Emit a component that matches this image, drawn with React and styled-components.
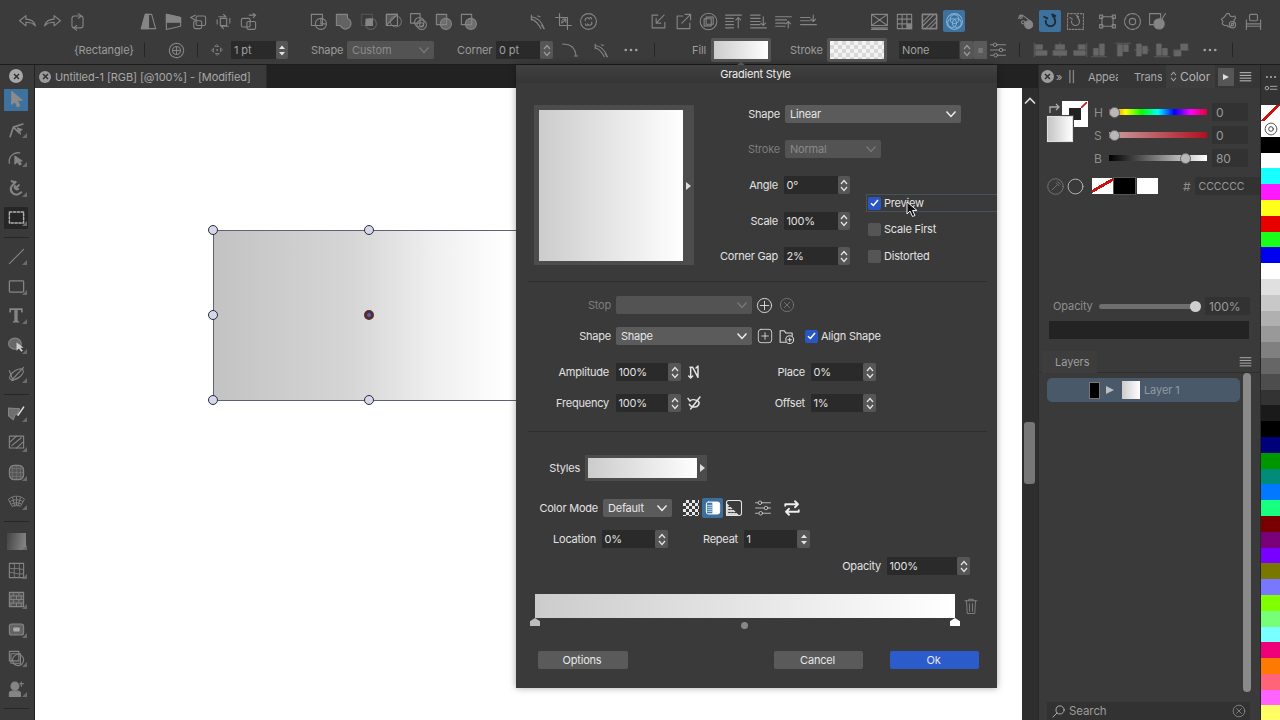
import React from "react";
import styled, { createGlobalStyle, css } from "styled-components";

const Global = createGlobalStyle`
  html, body { margin: 0; padding: 0; background: #3a3a3a; overflow: hidden; }
  * { box-sizing: border-box; }
  #root { width: 1280px; height: 720px; }
`;

const dl = (d, extra = {}) => <path d={d} {...extra} />;
const knobs = (
  <>
    <path d="M2 5h20M2 12h20M2 19h20" />
    <circle cx="8" cy="5" r="2.4" fill="#3a3a3a" />
    <circle cx="16" cy="12" r="2.4" fill="#3a3a3a" />
    <circle cx="9" cy="19" r="2.4" fill="#3a3a3a" />
  </>
);
const ICONS = {
  undo: dl("M2 11 10 4.5V9c6 0 10 2 12 8.5-3-3.3-7-4.5-12-4.5v4.5z"),
  redo: dl("M22 11 14 4.5V9c-6 0-10 2-12 8.5 3-3.3 7-4.5 12-4.5v4.5z"),
  loop: <><rect x="5" y="5" width="14" height="15" rx="3" /><path d="m13 2 4 3-4 3M11 23l-4-3 4-3" /></>,
  persp1: <><path d="M8 3h8l5 18H3z" /><path d="M8 3h4v18H3z" fill="currentColor" /></>,
  persp2: <><path d="M3 3l18 4v11L3 22z" /><path d="M3 3l18 4v6H3z" fill="currentColor" /></>,
  rot1: <><rect x="9" y="5" width="12" height="12" rx="2" /><rect x="6" y="11" width="10" height="10" rx="2" /><path d="M8 4 2 7l6 3" /></>,
  rot2: <><rect x="8" y="8" width="8" height="9" /><path d="M6 6h9l-3-3M18 18H9l3 3M4 10v5M20 8v6" /></>,
  rot3: <><rect x="3" y="8" width="11" height="11" rx="2" /><rect x="10" y="12" width="11" height="10" rx="2" /><path d="M13 4h8l-3-2m3 2-3 3" /></>,
  b1: <><path d="M3 3h14v14H3z" /><circle cx="15" cy="15" r="7" /><path d="M15 9v6h6" /></>,
  b2: <path d="M3 3h14v5a7 7 0 1 1-9 9H3z" fill="currentColor" fillOpacity=".55" />,
  b3: <><path d="M9 9h8v8H9z" fill="currentColor" /><circle cx="15" cy="15" r="7" opacity=".5" /><rect x="3" y="3" width="14" height="14" opacity=".3" /></>,
  b4: <><path d="M3 3h14L3 17z" fill="currentColor" fillOpacity=".4" /><path d="M3 3h14v14H3z" /><circle cx="15" cy="12" r="7" opacity=".7" /></>,
  b5: <><rect x="2" y="2" width="12" height="12" /><circle cx="13" cy="13" r="6" /><circle cx="16" cy="16" r="6" /><circle cx="16" cy="16" r="2.5" /></>,
  b6: <><rect x="3" y="3" width="13" height="13" fill="currentColor" fillOpacity=".25" /><circle cx="15" cy="15" r="7" fill="currentColor" fillOpacity=".6" /></>,
  b7: <><rect x="3" y="3" width="13" height="13" /><circle cx="15" cy="15" r="7" fill="currentColor" fillOpacity=".7" /></>,
  curve: <><path d="M3 6c8 1 13 6 16 15M3 9c6 2 9 6 12 12" /><path d="M3 4v6M16 17l3 4M11 5l3 1" /></>,
  crop: <><path d="M7 2v15h15M2 7h15v15" /><path d="M10 14l5-5M11 9h4v4M10 14v-3" /></>,
  link: <><circle cx="12" cy="12" r="10" /><path d="M8 11a2.500 2.500 0 0 1 5-2M16 13a2.500 2.500 0 0 1-5 2M12 8l3-1 1 2M12 16l-3 1-1-2" /></>,
  boxin: <><path d="M11 4H4v16h16v-7" /><path d="M19 4 9 14M9 8v6h6" /></>,
  boxout: <><path d="M11 5H4v16h16v-7" /><path d="M10 14 21 3M14 3h7v7" /></>,
  concentric: <><circle cx="12" cy="12" r="10.5" /><rect x="6.5" y="8.5" width="9" height="9" /><rect x="9" y="6.5" width="9" height="9" /></>,
  al1: <path d="M2 4h20M2 8h10M2 12h10M2 16h10M2 20h10M18 20V7M15 10l3-3 3 3" />,
  al2: <path d="M2 4h12M2 8h12M2 12h12M2 20h20M18 6v11M15 14l3 3 3-3M2 16h12" />,
  al3: <path d="M2 6h20M2 10h14M2 14h12M2 18h12M18 20v-8M15 15l3-3 3 3" />,
  al4: <path d="M2 7h12M2 11h12M2 16h20M18 4v8M15 9l3 3 3-3" />,
  env: <><rect x="2" y="3" width="20" height="14" /><path d="M2 3l20 14M22 3 2 17M2 20h20M2 22h20" /></>,
  grid: <><rect x="3" y="3" width="18" height="18" /><path d="M9 3v18M15 3v12M3 9h18M3 15h12" /><path d="M15 15h6v6h-6z" fill="currentColor" /></>,
  hatch: <><rect x="3" y="3" width="18" height="18" strokeWidth="2" /><path d="M3 13 13 3M3 18 18 3M7 21 21 7M12 21l9-9" /></>,
  flower: <><circle cx="12" cy="12" r="10" /><circle cx="12" cy="9" r="5.5" /><circle cx="9" cy="14" r="5.5" /><circle cx="15" cy="14" r="5.5" /></>,
  magnetNodes: <><path d="M3 8l5-4 11 8" /><circle cx="6" cy="6" r="2" /><circle cx="9" cy="13" r="2" /><circle cx="16" cy="16" r="5" fill="currentColor" /></>,
  magnet: <path d="M6 11v1a6 6 0 0 0 12 0c0-3-1-5-3-7M4 6l4 2M14 3l4 2" strokeWidth="2.4" />,
  magnetDash: <><rect x="2" y="2" width="20" height="20" strokeDasharray="2 2" /><path d="M7 11v1a5 5 0 0 0 10 0c0-3-1-4-3-6M5 7l3 2M13 4l3 2" /></>,
  corners: <><rect x="5" y="6" width="14" height="12" /><path d="M2 4h4v4H2zM18 4h4v4h-4zM2 16h4v4H2zM18 16h4v4h-4z" /></>,
  target: <><circle cx="12" cy="12" r="10" strokeDasharray="5 1.5" /><circle cx="12" cy="12" r="4" /></>,
  sqCircle: <><rect x="2" y="2" width="14" height="14" /><circle cx="14" cy="15" r="6.5" fill="currentColor" /><path d="M22 2l-8 13" /></>,
  gear: <><path d="M10 2h3l1 3 3 1 3-1 1 3-2 2v4l-3 1-1 3-3 1-2-2H7l-3-2 1-3-2-3 3-2z" /><circle cx="17" cy="16" r="4" /><circle cx="17" cy="16" r="1.5" /></>,
  chair: <><rect x="7" y="3" width="10" height="8" rx="1.5" /><path d="M3 10v12M21 10v12M3 15h18v-2" /><path d="M3 18h18" /></>,
  flower2: <><circle cx="12" cy="12" r="9" strokeDasharray="3 1" /><circle cx="12" cy="12" r="5" /><path d="M12 8v8M8 12h8" /></>,
  move: <><path d="M12 3l3 3h-6zM12 21l-3-3h6zM3 12l3-3v6zM21 12l-3 3V9z" /><circle cx="12" cy="12" r="1" /></>,
  corner: <path d="M2 4c8 0 17 3 18 16M18 20h4" />,
  sliders: knobs,
  close: <><circle cx="12" cy="12" r="10" /><path d="M8 8l8 8M16 8l-8 8" /></>,
  plusC: <><circle cx="12" cy="12" r="10" /><path d="M12 6v12M6 12h12" /></>,
  plusS: <><rect x="2" y="2" width="20" height="20" rx="4" /><path d="M12 7v10M7 12h10" /></>,
  folder: <><path d="M11 20H3V4h6l2 3h9v4" /><circle cx="16.5" cy="16.5" r="5.5" /><path d="M16.5 14v5M14 16.5h5" /></>,
  nodeX: <path d="M6 5h4l8 15M7 5v15M18 4v16M4 18l3 3 3-3M15 6l3-3" strokeWidth="2.200" />,
  wave: <path d="M3 5l3 4c2-3 8-2 12 0 4 3 0 9-5 9-4 0-7-2-8-4M21 3 7 21" strokeWidth="2.200" />,
  splitBox: <><rect x="2" y="3" width="20" height="18" rx="3" fill="#fff" stroke="#fff" /><path d="M3 4h8v16H3z" fill="#3d79ad" stroke="none" /><path d="M4 8h6M4 11h6M4 14h6M4 17h6" stroke="#cde" /></>,
  gridCorner: <><rect x="2" y="2" width="20" height="20" rx="3" /><path d="M2 6l16 16H2z" fill="currentColor" fillOpacity=".9" /><path d="M5 10h2M9 14h2M5 14h2M5 18h2M9 18h2M13 18h2" stroke="#333" strokeWidth="1.600" /></>,
  swap: <path d="M3 9V7h17M16 3l4 4-4 4M21 15v2H4M8 13l-4 4 4 4" strokeWidth="2.400" />,
  trash: <path d="M4 5h16M9 5V3h6v2M6 5l1 17h10l1-17M10 9v10M14 9v10" />,
  drop: <><circle cx="12" cy="12" r="11" /><path d="M7 17l7-7M13 7l4 4M15 5l4 4" /></>,
  ring: <circle cx="12" cy="12" r="10.5" />,
  search: <><circle cx="14.5" cy="9.5" r="6.5" /><path d="M9.500 14.500 3 21" /></>,
  menu: <path d="M2 5h20M2 10h20M2 15h20M2 20h20" strokeWidth="1.800" />,
  listDots: <><circle cx="5" cy="7" r="3" /><path d="M11 4h11M11 9h11" /></>,
  dots: <><circle cx="5" cy="12" r="1.800" fill="currentColor" stroke="none" /><circle cx="12" cy="12" r="1.800" fill="currentColor" stroke="none" /><circle cx="19" cy="12" r="1.800" fill="currentColor" stroke="none" /></>,
  a1: <path d="M3 3v18M5 5h9v6H5zM5 13h15v6H5z" fill="currentColor" />,
  a2: <path d="M12 2v20M6 5h12v6H6zM3 13h18v6H3z" fill="currentColor" />,
  a3: <path d="M21 3v18M10 5h9v6h-9zM4 13h15v6H4z" fill="currentColor" />,
  a4: <path d="M2 21h20M5 10h6v9H5zM13 4h6v15h-6z" fill="currentColor" />,
  a5: <path d="M2 3h20M5 5h6v15H5zM13 5h6v9h-6z" fill="currentColor" />,
  a6: <path d="M2 12h20M5 4h6v16H5zM13 7h6v10h-6z" fill="currentColor" />,
  a7: <path d="M2 21h20M5 4h6v15H5zM13 10h6v9h-6z" fill="currentColor" />,
  a8: <path d="M2 12h20M3 13h9v7H3zM12 4h9v8h-9z" fill="currentColor" />,
  arrow: <path d="M6 2v16l4-4 3 7 3-1-3-7h6z" fill="currentColor" />,
  nodeTool: <><path d="M4 21l4-12 12-4M8 9l7 7" strokeWidth="2" /><path d="M13 10l6 2-3 2 1 4z" fill="currentColor" /></>,
  arcArrow: <><path d="M3 18a11 11 0 0 1 13-13" strokeWidth="1.600" /><path d="M10 9v10l3-3 3 4 2-1-3-4h4z" fill="currentColor" /></>,
  magnetTool: <path d="M7 9l-2 3a7 7 0 0 0 10 8l3-2M11 5l-3 3M15 9l-3 3M6 4l4 1M10 10a3 3 0 0 0 4 4" strokeWidth="2.600" />,
  dashRect: <rect x="3" y="5" width="18" height="14" strokeDasharray="3 2" strokeWidth="1.800" />,
  line: <path d="M3 21 21 3" />,
  rect: <rect x="3" y="5" width="18" height="14" rx="1" strokeWidth="1.600" />,
  T: <path d="M4 4h16v5h-1.500l-1-3H14v13l2 1v1H8v-1l2-1V6H6.500l-1 3H4z" fill="currentColor" stroke="none" />,
  blob: <><ellipse cx="10" cy="11" rx="8" ry="7" fill="currentColor" fillOpacity=".6" /><path d="M12 9v11l3-3 3 4 2-1-3-4h4z" fill="#ccc" stroke="none" /></>,
  orbit: <><ellipse cx="12" cy="12" rx="10" ry="5" transform="rotate(-35 12 12)" /><path d="M3 7l4 11 14-15M6 20l10-5" /></>,
  brush: <><path d="M2 5l14 1-3 7-3 1-2 6-6-5z" fill="currentColor" fillOpacity=".7" /><path d="M14 14 21 4" stroke="#ddd" strokeWidth="2" /></>,
  panel: <><rect x="3" y="4" width="18" height="15" /><path d="M6 16 18 6M3 12l9-8M12 19l9-8" /></>,
  rounded: <><rect x="3" y="3" width="18" height="18" rx="6" fill="currentColor" fillOpacity=".4" /><path d="M3 12h18M12 3v18M7 3v18M17 3v18M3 7h18M3 17h18" strokeWidth=".5" /></>,
  fan: <path d="M2 9c6-5 14-5 20 0l-5 9c-3-2-7-2-10 0zM7 7l3 11M12 6v11M17 7l-3 11M4 12c5-3 11-3 16 0M6 15c4-2 8-2 12 0" strokeWidth="1.100" />,
  mesh: <><rect x="3" y="3" width="18" height="18" /><path d="M3 9c5 2 8-1 18 2M3 15c6-2 9 3 18 1M9 3c2 6-2 10 1 18M16 3c-2 6 2 10-1 18" strokeWidth="1.100" /></>,
  bricks: <><rect x="3" y="3" width="18" height="18" fill="currentColor" fillOpacity=".35" /><path d="M3 7.500h18M3 12h18M3 16.500h18M8 3v4.500M15 3v4.500M5 7.500V12M12 7.500V12M18 7.500V12M8 12v4.500M15 12v4.500M5 16.500V21M12 16.500V21M18 16.500V21" strokeWidth="1.100" /></>,
  frame: <><rect x="3" y="5" width="18" height="14" rx="3" fill="currentColor" fillOpacity=".55" /><rect x="8" y="9.500" width="8" height="5" rx="1" fill="#aaa" stroke="none" /></>,
  stack: <><rect x="3" y="3" width="12" height="12" /><rect x="5" y="6" width="12" height="12" /><circle cx="14" cy="14" r="7" /></>,
  stamp: <><circle cx="10" cy="9" r="5" fill="currentColor" /><path d="M3 22v-4c0-2 3-3 7-3s7 1 7 3v4z" fill="currentColor" /><path d="M18 4v5M16 6h5" /></>,
};

const Svg = styled.svg`
  display: block;
  flex: none;
  width: ${(p) => p.$s || 20}px;
  height: ${(p) => p.$s || 20}px;
  color: ${(p) => p.$c || "#858585"};
  fill: none;
  stroke: currentColor;
  stroke-width: ${(p) => p.$w || 1.4};
  stroke-linecap: round;
  stroke-linejoin: round;
  margin-left: ${(p) => p.$ml || 0}px;
`;
const Ic = ({ n, s, c, w, ml }) => (
  <Svg viewBox="0 0 24 24" $s={s} $c={c} $w={w} $ml={ml}>{ICONS[n]}</Svg>
);

const App_ = styled.div`
  position: relative;
  width: 1280px;
  height: 720px;
  overflow: hidden;
  display: flex;
  flex-direction: column;
  background: #3a3a3a;
  font-family: Inter, "Liberation Sans", sans-serif;
  font-size: 11px;
  letter-spacing: -0.1px;
  color: #e2e2e2;
`;

/* ---------- toolbar ---------- */
const Toolbar = styled.header`
  flex: none;
  height: 65px;
  background: #3b3b3b;
  border-bottom: 1px solid #1d1d1d;
  padding-top: 8px;
`;
const IconRow = styled.div`
  display: flex;
  height: 26px;
  padding-left: 14.5px;
`;
const IconGroup = styled.div`
  display: flex;
  margin-left: ${(p) => p.$ml || 0}px;
`;
const ToolCell = styled.div`
  width: 25px;
  height: 26px;
  display: flex;
  align-items: center;
  justify-content: center;
  position: relative;
  ${(p) => p.$on && css`
    &::before {
      content: "";
      position: absolute;
      inset: 2px 1.5px;
      background: #3d729f;
      border-radius: 2px;
    }
    & > svg { position: relative; }
  `}
`;
const PropRow = styled.div`
  display: flex;
  align-items: center;
  height: 20px;
  margin-top: 6px;
  padding-left: 74px;
  color: #9c9c9c;
`;
const Txt = styled.span`
  flex: none;
  width: ${(p) => p.$w}px;
  margin-left: ${(p) => p.$ml || 0}px;
  white-space: nowrap;
  overflow: ${(p) => p.$clip ? "hidden" : "visible"};
  text-align: ${(p) => p.$a || "left"};
`;
const VSep = styled.i`
  flex: none;
  display: block;
  width: 1px;
  height: 14px;
  background: #252525;
  margin-left: ${(p) => p.$ml || 0}px;
`;
const Slot = styled.div`
  flex: none;
  display: flex;
  justify-content: center;
  align-items: center;
  width: ${(p) => p.$w}px;
  margin-left: ${(p) => p.$ml || 0}px;
`;
const Input = styled.div`
  flex: none;
  width: ${(p) => p.$w}px;
  height: ${(p) => p.$h || 18}px;
  margin-left: ${(p) => p.$ml || 0}px;
  background: #2a2a2a;
  color: ${(p) => p.$dim ? "#a0a0a0" : "#e0e0e0"};
  display: flex;
  align-items: center;
  padding-left: ${(p) => p.$dim ? 3 : 2.5}px;
  border-radius: 1px;
`;
const Select = styled.div`
  flex: none;
  width: ${(p) => p.$w}px;
  height: 18px;
  margin-left: ${(p) => p.$ml || 0}px;
  background: ${(p) => p.$dim ? "#535353" : "#5b5b5b"};
  color: ${(p) => p.$dim ? "#8a8a8a" : "#e6e6e6"};
  display: flex;
  align-items: center;
  justify-content: space-between;
  padding: 0 4px 0 5px;
  border-radius: 2px;
`;
const Chevron = ({ c = "#f0f0f0" }) => (
  <svg width="12" height="8" viewBox="0 0 12 8" fill="none" stroke={c} strokeWidth="1.400"><path d="M1.500 1.500 6 6.500l4.500-5" /></svg>
);
const StepBox = styled.div`
  flex: none;
  width: ${(p) => p.$w || 13}px;
  height: 18px;
  margin-left: ${(p) => p.$ml || 0}px;
  background: #565656;
  border-radius: 2px;
  display: flex;
  align-items: center;
  justify-content: center;
  color: ${(p) => p.$c || "#e4e4e4"};
`;
const Stepper = ({ w, ml, c, solid }) => (
  <StepBox $w={w} $ml={ml} $c={c}>
    <svg width="8" height="13" viewBox="0 0 8 13" fill={solid ? "currentColor" : "none"} stroke="currentColor" strokeWidth={solid ? 0 : 1.2}>
      {solid ? <path d="M4 1.500 7 5H1zM4 11.500 1 8h6z" /> : <path d="M1 5 4 1.500 7 5M1 8l3 3.500L7 8" />}
    </svg>
  </StepBox>
);
const SwatchWell = styled.div`
  flex: none;
  width: 60px;
  height: 24px;
  margin-left: ${(p) => p.$ml || 0}px;
  background: #555;
  padding: 3px;
  border-radius: 2px;
`;
const FillSwatch = styled.div`
  width: 100%;
  height: 100%;
  background: ${(p) => p.$check
    ? "repeating-conic-gradient(#d8d8d8 0 25%, #f4f4f4 0 50%) 0 0 / 8px 8px"
    : "linear-gradient(90deg, #ccc, #fff)"};
`;
const StepDisabled = styled.div`
  flex: none;
  width: 13px;
  height: 18px;
  background: #5a5a5a;
  display: flex;
  align-items: center;
  justify-content: center;
  color: #777;
  font-size: 6px;
`;

/* ---------- body ---------- */
const Body = styled.div`
  flex: 1;
  display: flex;
  min-height: 0;
`;
const ToolCol = styled.aside`
  flex: none;
  width: 35px;
  height: 655px;
  overflow: hidden;
  background: #3a3a3a;
  border-right: 1px solid #222;
  padding-top: 2px;
`;
const CloseSlot = styled.div`
  height: 18px;
  display: flex;
  align-items: center;
  justify-content: center;
  padding-right: 2px;
`;
const XBadge = styled.div`
  flex: none;
  width: ${(p) => p.$s || 13}px;
  height: ${(p) => p.$s || 13}px;
  border-radius: 50%;
  background: ${(p) => p.$bg || "#9c9c9c"};
  color: #2c2c2c;
  display: flex;
  align-items: center;
  justify-content: center;
`;
const X = ({ s, bg }) => (
  <XBadge $s={s} $bg={bg}>
    <svg width="7" height="7" viewBox="0 0 7 7" stroke="currentColor" strokeWidth="1.400"><path d="M1 1l5 5M6 1 1 6" /></svg>
  </XBadge>
);
const Tool = styled.div`
  position: relative;
  height: 29.4px;
  display: flex;
  align-items: center;
  justify-content: center;
  padding-right: 2px;
  color: #8a8a8a;
  ${(p) => p.$on && css`
    &::before {
      content: "";
      position: absolute;
      left: 4px;
      right: 6px;
      top: 4px;
      bottom: 3px;
      background: ${p.$on === "blue" ? "#3d729f" : "#262626"};
      border-radius: 1px;
    }
    & > svg { position: relative; }
  `}
  ${(p) => p.$fly && css`
    &::after {
      content: "";
      position: absolute;
      right: 7px;
      bottom: 6px;
      border-style: solid;
      border-width: 0 0 5px 5px;
      border-color: transparent transparent #6c6c6c transparent;
    }
  `}
`;
const ToolSep = styled.hr`
  height: 1px;
  margin: 5px 5px 4px 4px;
  border: 0;
  background: #262626;
`;
const GradientChip = styled.div`
  width: 19px;
  height: 17px;
  background: linear-gradient(100deg, #444, #8a8a8a);
`;

const DocCol = styled.main`
  flex: none;
  width: 1003px;
  display: flex;
  flex-direction: column;
`;
const TabBar = styled.div`
  flex: none;
  height: 23px;
  background: #222;
  display: flex;
`;
const DocTab = styled.div`
  width: 232px;
  background: #3a3a3a;
  display: flex;
  align-items: center;
  gap: 4px;
  padding-left: 4px;
  color: #a8a8a8;
  border-right: 1px solid #2c2c2c;
`;
const DocRow = styled.div`
  flex: 1;
  display: flex;
  min-height: 0;
`;
const Canvas = styled.div`
  position: relative;
  width: 987px;
  background: #fff;
`;
const Shape = styled.div`
  position: absolute;
  left: 178px;
  top: 142px;
  width: 312px;
  height: 171px;
  background: linear-gradient(90deg, #c3c3c3, #d6d6d6 45%, #f0f0f0 72%, #fff 95%);
  border: 1px solid #5f607c;
`;
const Handle = styled.i`
  position: absolute;
  width: 10px;
  height: 10px;
  border-radius: 50%;
  background: #d4d8ea;
  border: 1.500px solid #2a2a36;
  left: ${(p) => p.$x}px;
  top: ${(p) => p.$y}px;
`;
const CenterDot = styled.i`
  position: absolute;
  width: 10px;
  height: 10px;
  border-radius: 50%;
  background: #3e6cc4;
  border: 3px solid #5a2a2e;
  left: 150px;
  top: 79px;
`;
const ScrollCol = styled.div`
  width: 16px;
  background: #2e2e2e;
  display: flex;
  flex-direction: column;
  align-items: center;
  padding-top: 9px;
`;
const ScrollThumb = styled.div`
  width: 11px;
  height: 62px;
  margin: 317px 0 0 -1px;
  background: #767676;
  border-radius: 3px;
`;

/* ---------- right panel ---------- */
const Panel = styled.section`
  flex: none;
  width: 222px;
  display: flex;
  flex-direction: column;
  background: #3a3a3a;
  border-left: 1px solid #2a2a2a;
`;
const PanelTabs = styled.div`
  flex: none;
  height: 23px;
  display: flex;
  align-items: center;
  background: #363636;
  color: #a8a8a8;
`;
const ColorTab = styled.div`
  flex: none;
  width: 49px;
  height: 23px;
  margin-left: 4px;
  background: #3d3d3d;
  display: flex;
  align-items: center;
  gap: 3px;
  padding-left: 4px;
  color: #b4b4b4;
  font-size: 12px;
`;
const PlayBtn = styled.div`
  flex: none;
  width: 16px;
  height: 18px;
  margin-left: 3px;
  background: #565656;
  display: flex;
  align-items: center;
  justify-content: center;
  &::before {
    content: "";
    border-style: solid;
    border-width: 3.500px 0 3.500px 6px;
    border-color: transparent transparent transparent #ddd;
  }
`;
const ColorArea = styled.div`
  display: flex;
  padding: 15px 0 0 8px;
`;
const SwatchStack = styled.div`
  position: relative;
  flex: none;
  width: 44px;
  height: 40px;
`;
const StrokeSq = styled.div`
  position: absolute;
  left: 15px;
  top: -2px;
  width: 26px;
  height: 26px;
  background: #fff;
  display: flex;
  align-items: center;
  justify-content: center;
  &::after {
    content: "";
    width: 12px;
    height: 12px;
    background: #222;
  }
`;
const StrokeSlash = styled.svg`
  position: absolute;
  right: 1px;
  top: 1px;
  width: 6px;
  height: 6px;
`;
const FillSq = styled.div`
  position: absolute;
  left: 0;
  top: 13px;
  width: 26px;
  height: 26px;
  border: 1px solid #ddd;
  outline: 1px solid #444;
  background: linear-gradient(90deg, #c4c4c4, #fff);
`;
const SwapMark = styled.div`
  position: absolute;
  left: 1px;
  top: -1px;
  color: #aaa;
`;
const Sliders = styled.div`
  display: flex;
  flex-direction: column;
  gap: 5px;
`;
const SliderRow = styled.div`
  display: flex;
  align-items: center;
  height: 18px;
  color: #8e8e8e;
`;
const SliderLabel = styled.span`
  width: 18px;
  padding-left: 3px;
  font-size: 12px;
`;
const Track = styled.div`
  position: relative;
  width: 98px;
  height: 6px;
  background: ${(p) => p.$bg};
`;
const Thumb = styled.i`
  position: absolute;
  width: 11px;
  height: 11px;
  top: -2.500px;
  left: ${(p) => p.$x}px;
  border-radius: 50%;
  background: #b8b8b8;
  border: 1px solid #666;
`;
const ValueBox = styled.div`
  width: ${(p) => p.$w || 36}px;
  height: 18px;
  margin-left: ${(p) => p.$ml || 5}px;
  background: #323232;
  display: flex;
  align-items: center;
  padding-left: 4px;
  color: #9a9a9a;
  font-size: 12px;
`;
const SwatchRow = styled.div`
  display: flex;
  align-items: center;
  height: 22px;
  margin-top: 8px;
  padding-left: 8px;
`;
const MiniSwatch = styled.div`
  flex: none;
  width: 21px;
  height: 16px;
  margin-left: ${(p) => p.$ml ?? 1}px;
  background: ${(p) => p.$bg};
  outline: ${(p) => p.$ring ? "1px solid #555" : "none"};
`;
const HexLabel = styled.span`
  flex: none;
  margin-left: 25px;
  color: #8e8e8e;
  font-size: 12px;
`;
const HexBox = styled(ValueBox)`
  margin-left: 4px;
  width: 66px;
  letter-spacing: 0;
  font-size: 10.500px;
`;
const OpacityRow = styled.div`
  display: flex;
  align-items: center;
  height: 18px;
  margin-top: 100px;
  padding-left: 14px;
  color: #8e8e8e;
`;
const OpacityTrack = styled.div`
  position: relative;
  width: 97px;
  height: 5px;
  margin-left: 7px;
  background: #6e6e6e;
  border-radius: 3px;
`;
const OpacityThumb = styled.i`
  position: absolute;
  right: -5px;
  top: -3px;
  width: 11px;
  height: 11px;
  border-radius: 50%;
  background: #cfcfcf;
`;
const DarkBar = styled.div`
  height: 18px;
  margin: 6px 11px 0 10px;
  background: #232323;
`;
const LayersHead = styled.div`
  flex: none;
  height: 22px;
  margin-top: 12px;
  display: flex;
  align-items: center;
  justify-content: space-between;
  border-bottom: 1px solid #2f2f2f;
  padding: 0 8px 0 3px;
`;
const LayersTab = styled.div`
  width: 55px;
  height: 22px;
  background: #3d3d3d;
  color: #9e9e9e;
  display: flex;
  align-items: center;
  padding-left: 13px;
  letter-spacing: 0;
`;
const LayersBody = styled.div`
  flex: 1;
  display: flex;
  min-height: 0;
`;
const LayerList = styled.div`
  flex: 1;
  padding: 5px 0 0 8px;
`;
const LayerRow = styled.div`
  width: 193px;
  height: 24px;
  background: #49596a;
  border-radius: 5px;
  display: flex;
  align-items: center;
  padding-left: 42px;
  color: #8f9aa5;
`;
const LayerBlack = styled.div`
  width: 11px;
  height: 17px;
  background: #000;
  border: 1px solid #777;
`;
const Tri = styled.i`
  display: block;
  margin-left: 6px;
  border-style: solid;
  border-width: 4.500px 0 4.500px 8px;
  border-color: transparent transparent transparent #bdbdbd;
`;
const LayerThumb = styled.div`
  width: 18px;
  height: 18px;
  margin: 0 4px 0 8px;
  background: linear-gradient(90deg, #ccc, #fff);
`;
const PanelScroll = styled.div`
  flex: none;
  width: 8px;
  margin: 0 9px 2px 3px;
  background: #8a8a8a;
  border-radius: 4px;
`;
const SearchBar = styled.div`
  flex: none;
  height: 26px;
  padding: 8px 10px 0 8px;
`;
const SearchInner = styled.div`
  height: 18px;
  background: #323232;
  display: flex;
  align-items: center;
  gap: 3px;
  padding: 0 4px;
  color: #9c9c9c;
  font-size: 11.5px;
  & > :last-child { margin-left: auto; }
`;
const Palette = styled.div`
  flex: none;
  width: 20px;
  background: #333;
  border-left: 1px solid #272727;
  display: flex;
  flex-direction: column;
`;
const PaletteHead = styled.div`
  flex: none;
  height: 40px;
  display: flex;
  flex-direction: column;
  align-items: center;
  padding-top: 5px;
  gap: 0;
`;
const PalDot = styled.div`
  flex: none;
  height: 15.8px;
  background: ${(p) => p.$c};
  display: flex;
  align-items: center;
  justify-content: center;
`;
const NoneChip = styled.div`
  flex: none;
  height: 16px;
  background: linear-gradient(135deg, #fff 44%, #c11 44%, #c11 56%, #fff 56%);
`;

/* ---------- dialog ---------- */
const Dialog = styled.div`
  position: absolute;
  left: 516px;
  top: 65px;
  width: 481px;
  height: 623px;
  background: #3a3a3a;
  letter-spacing: -0.22px;
  box-shadow: 0 0 7px rgba(0,0,0,.35);
  &::before {
    content: "";
    position: absolute;
    left: 221px;
    top: -3px;
    border-style: solid;
    border-width: 0 4px 3px 4px;
    border-color: transparent transparent #555 transparent;
  }
`;
const DialogTitle = styled.div`
  height: 18px;
  background: linear-gradient(#414141, #353535);
  text-align: center;
  line-height: 18px;
  color: #ececec;
  padding-right: 2px;
`;
const TopPart = styled.div`
  display: flex;
  padding: 22px 0 0 18px;
`;
const PreviewWell = styled.div`
  flex: none;
  display: flex;
  align-items: center;
  width: 160px;
  height: 160px;
  background: #4c4c4c;
  padding: 5px 0 4px 5px;
`;
const PreviewInner = styled.div`
  flex: none;
  width: 144px;
  height: 151px;
  background: linear-gradient(90deg, #ccc, #fff);
`;
const WellArrow = styled.i`
  display: block;
  flex: none;
  margin-left: ${(p) => p.$ml || 3}px;
  border-style: solid;
  border-width: 4px 0 4px 5px;
  border-color: transparent transparent transparent #ddd;
`;
const TopRight = styled.div`
  display: flex;
  flex-direction: column;
  flex: 1;
`;
const FormRow = styled.div`
  display: flex;
  align-items: center;
  height: 18px;
  margin-top: ${(p) => p.$mt || 0}px;
  padding-left: ${(p) => p.$pl || 0}px;
`;
const Label = styled.label`
  flex: none;
  width: ${(p) => p.$w}px;
  margin-left: ${(p) => p.$ml || 0}px;
  margin-right: ${(p) => p.$gap ?? 5}px;
  text-align: right;
  white-space: nowrap;
  color: ${(p) => p.$dim ? "#7d7d7d" : "#e2e2e2"};
`;
const LowerTop = styled.div`
  display: flex;
  margin-top: 18px;
`;
const FieldCol = styled.div`
  display: flex;
  flex-direction: column;
  gap: 17.5px;
`;
const CheckCol = styled.div`
  position: relative;
  margin: 18px 0 0 16px;
  flex: 1;
  display: flex;
  flex-direction: column;
`;
const CheckRow = styled.div`
  position: relative;
  display: flex;
  align-items: center;
  height: 18px;
  padding-left: 2px;
  margin-top: ${(p) => p.$mt || 0}px;
  ${(p) => p.$focus && css`
    border: 1px solid #46535f;
    border-right: 0;
    padding-left: 1px;
  `}
`;
const Box = styled.div`
  flex: none;
  width: 13px;
  height: 13px;
  border-radius: 2px;
  margin-left: ${(p) => p.$ml || 0}px;
  margin-right: 3px;
  background: ${(p) => p.$on ? "#2a55c4" : "#555"};
  display: flex;
  align-items: center;
  justify-content: center;
`;
const Check = ({ on, ml }) => (
  <Box $on={on} $ml={ml}>
    {on && <svg width="9" height="8" viewBox="0 0 9 8" fill="none" stroke="#fff" strokeWidth="1.500"><path d="M1 4.200 3.400 6.500 8 1" /></svg>}
  </Box>
);
const CursorMark = styled.svg`
  position: absolute;
  left: 39px;
  top: 6px;
  width: 13px;
  height: 17px;
`;
const Rule = styled.hr`
  height: 1px;
  border: 0;
  margin: ${(p) => p.$mt}px 10px 0 12px;
  background: #2e2e2e;
`;
const StyleWell = styled.div`
  flex: none;
  display: flex;
  align-items: center;
  width: 122px;
  height: 26px;
  background: #4c4c4c;
  padding: 3px 0 3px 3px;
`;
const StyleInner = styled.div`
  flex: none;
  width: 109px;
  height: 20px;
  background: linear-gradient(90deg, #ccc, #fff);
`;
const StyleRow = styled.div`
  display: flex;
  align-items: center;
  height: 26px;
  margin-top: 23px;
  padding-left: 12px;
`;
const ModeBtn = styled.div`
  flex: none;
  width: ${(p) => p.$w || 20}px;
  height: 20px;
  margin-left: ${(p) => p.$ml || 0}px;
  display: flex;
  align-items: center;
  justify-content: center;
  background: ${(p) => p.$on ? "#3d6f9c" : "transparent"};
  border-radius: 2px;
`;
const CheckerChip = styled.div`
  width: 16px;
  height: 16px;
  background: repeating-conic-gradient(#e8e8e8 0 25%, #3a3a3a 0 50%) 0 0 / 6px 6px;
`;
const BarRow = styled.div`
  display: flex;
  align-items: center;
  margin-top: 19px;
  padding-left: 19px;
`;
const GradBar = styled.div`
  position: relative;
  flex: none;
  width: 420px;
  height: 24px;
  background: linear-gradient(90deg, #ccc, #fff);
`;
const Stop = styled.i`
  position: absolute;
  top: 24px;
  left: ${(p) => p.$x}px;
  width: 10px;
  height: 8px;
  background: ${(p) => p.$c};
  clip-path: polygon(50% 0, 100% 40%, 100% 100%, 0 100%, 0 40%);
`;
const MidDot = styled.i`
  position: absolute;
  top: 28px;
  left: 206px;
  width: 7px;
  height: 7px;
  border-radius: 50%;
  background: #888;
`;
const ButtonRow = styled.div`
  display: flex;
  margin-top: 33px;
  padding-left: 22px;
`;
const Btn = styled.button`
  flex: none;
  width: ${(p) => p.$w}px;
  height: 18px;
  margin-left: ${(p) => p.$ml || 0}px;
  padding: 0 2px 0 0;
  border: 0;
  border-radius: 2px;
  font: inherit;
  letter-spacing: inherit;
  background: ${(p) => p.$primary ? "#2c5ccb" : "#5a5a5a"};
  color: #e8e8e8;
`;

const PALETTE = ["#000","#fff","#19ffff","#ff19ff","#ffff19","#e60000","#19ff19","#0000f0","#fff","#e0e0e0","#c8c8c8","#b0b0b0","#999","#808080","#666","#4d4d4d","#333","#1a1a1a","#000","#000078","#009600","#008a78","#0078ff","#19ff80","#780000","#780078","#7800ff","#787800","#7878ff","#80ff00","#78ff78","#78ffff","#f00078","#ff7800","#ff6478","#ff64ff","#ffff64"];

const top = [
  { ml: 0, items: ["undo", "redo", "loop"] },
  { ml: 46, items: ["persp1", "persp2", "rot1", "rot2", "rot3"] },
  { ml: 45, items: ["b1", "b2", "b3", "b4", "b5", "b6", "b7"] },
  { ml: 45, items: ["curve", "crop", "link"] },
  { ml: 45, items: ["boxin", "boxout", "concentric", "al1", "al2", "al3", "al4"] },
  { ml: 46, items: ["env", "grid", "hatch", "flower"] },
  { ml: 46, items: ["magnetNodes", "magnet", "magnetDash"] },
  { ml: 7, items: ["corners", "target", "sqCircle"] },
  { ml: 46, items: ["gear", "chair"] },
];
const selected = { flower: 1, magnet: 1 };

const toolGroups = [
  ["arrow", "nodeTool", "arcArrow", "magnetTool", "dashRect"],
  ["line", "rect", "T", "blob", "orbit"],
  ["brush", "panel", "rounded", "fan"],
  ["gradient", "mesh", "bricks", "frame", "stack", "stamp"],
];

const Spin = ({ label, lw, lml, gap, iw = 52, value, sw }) => (
  <>
    <Label $w={lw} $ml={lml} $gap={gap}>{label}</Label>
    <Input $w={iw}>{value}</Input>
    <Stepper w={sw} />
  </>
);

export default function App() {
  return (
    <App_>
      <Global />
      <Toolbar>
        <IconRow>
          {top.map((g, i) => (
            <IconGroup key={i} $ml={g.ml}>
              {g.items.map((n) => (
                <ToolCell key={n} $on={selected[n]}>
                  <Ic n={n} s={19} c={n === "magnet" ? "#1f2b38" : n === "flower" ? "#7fb0d8" : undefined} />
                </ToolCell>
              ))}
            </IconGroup>
          ))}
        </IconRow>
        <PropRow>
          <Txt $w={58}>{"{Rectangle}"}</Txt>
          <VSep $ml={12} />
          <Slot $w={20} $ml={21}><Ic n="flower2" s={19} /></Slot>
          <VSep $ml={11} />
          <Slot $w={16} $ml={11}><Ic n="move" s={14} /></Slot>
          <Input $w={45} $ml={6} $dim>1 pt</Input>
          <Stepper w={12} solid />
          <Txt $w={32} $ml={23}>Shape</Txt>
          <Select $w={87} $ml={4} $dim>Custom<Chevron c="#777" /></Select>
          <Txt $w={36} $ml={23}>Corner</Txt>
          <Input $w={44} $ml={3} $dim>0 pt</Input>
          <Stepper c="#999" />
          <Slot $w={20} $ml={7}><Ic n="corner" s={18} /></Slot>
          <Slot $w={20} $ml={12}><Ic n="curve" s={18} /></Slot>
          <Slot $w={18} $ml={10}><Ic n="dots" s={18} c="#a0a0a0" /></Slot>
          <VSep $ml={14} />
          <Txt $w={15} $ml={37}>Fill</Txt>
          <SwatchWell $ml={4}><FillSwatch /></SwatchWell>
          <Txt $w={34} $ml={19}>Stroke</Txt>
          <SwatchWell $ml={3}><FillSwatch $check /></SwatchWell>
          <Input $w={60} $ml={12} $dim>None</Input>
          <Stepper w={14} ml={1} c="#999" />
          <StepDisabled>■</StepDisabled>
          <Slot $w={20} $ml={1}><Ic n="sliders" s={18} c="#9a9a9a" w={1.100} /></Slot>
          <VSep $ml={11} />
          <IconGroup $ml={11}>
            {["a1", "a2", "a3", "a4"].map((n) => <Slot key={n} $w={19.500}><Ic n={n} s={18} c="#666" w={1} /></Slot>)}
          </IconGroup>
          <IconGroup $ml={4}>
            {["a5", "a6", "a7", "a8"].map((n) => <Slot key={n} $w={19.500}><Ic n={n} s={18} c="#666" w={1} /></Slot>)}
          </IconGroup>
          <Slot $w={18} $ml={10}><Ic n="dots" s={18} c="#a0a0a0" /></Slot>
          <VSep $ml={13} />
        </PropRow>
      </Toolbar>

      <Body>
        <ToolCol>
          <CloseSlot><X s={14} bg="#a8a8a8" /></CloseSlot>
          {toolGroups.map((g, i) => (
            <React.Fragment key={i}>
              {g.map((n) => (
                <Tool key={n} $on={n === "arrow" ? "blue" : n === "dashRect" ? "dark" : undefined} $fly={n !== "arrow"}>
                  {n === "gradient" ? <GradientChip /> : <Ic n={n} s={n === "T" ? 20 : 19} c={n === "arrow" ? "#8c8a8a" : n === "dashRect" ? "#b0b0b0" : undefined} />}
                </Tool>
              ))}
              <ToolSep />
            </React.Fragment>
          ))}
          <Tool $fly><Ic n="brush" s={19} /></Tool>
        </ToolCol>

        <DocCol>
          <TabBar>
            <DocTab><X s={12} bg="#9c9c9c" />Untitled-1 [RGB] [@100%] - [Modified]</DocTab>
          </TabBar>
          <DocRow>
            <Canvas>
              <Shape>
                <Handle $x={-6} $y={-6} />
                <Handle $x={150} $y={-6} />
                <Handle $x={-6} $y={79} />
                <Handle $x={-6} $y={164} />
                <Handle $x={150} $y={164} />
                <CenterDot />
              </Shape>
            </Canvas>
            <ScrollCol>
              <svg width="12" height="8" viewBox="0 0 12 8" fill="none" stroke="#ddd" strokeWidth="1.600"><path d="M1 6.500 6 1.500l5 5" /></svg>
              <ScrollThumb />
            </ScrollCol>
          </DocRow>
        </DocCol>

        <Panel>
          <PanelTabs>
            <Slot $w={13} $ml={2}><X s={13} /></Slot>
            <Txt $w={10} $ml={2}>»</Txt>
            <Txt $w={8} $ml={2}>||</Txt>
            <Txt $w={30} $ml={12} $clip>Appea</Txt>
            <Txt $w={28} $ml={16} $clip>Transp</Txt>
            <ColorTab>
              <svg width="7" height="11" viewBox="0 0 8 13" fill="none" stroke="#aaa" strokeWidth="1.200"><path d="M1 5 4 1.500 7 5M1 8l3 3.500L7 8" /></svg>
              Color
            </ColorTab>
            <PlayBtn />
            <Slot $w={14} $ml={4}><Ic n="menu" s={13} c="#c4c4c4" w={2} /></Slot>
          </PanelTabs>
          <ColorArea>
            <SwatchStack>
              <StrokeSq>
                <StrokeSlash viewBox="0 0 6 6"><path d="M0 6 6 0" stroke="#c11" strokeWidth="1.600" /></StrokeSlash>
              </StrokeSq>
              <FillSq />
              <SwapMark>
                <svg width="13" height="12" viewBox="0 0 13 12" fill="none" stroke="currentColor" strokeWidth="1.300"><path d="M2 11V5h9M8 2l3 3-3 3" /></svg>
              </SwapMark>
            </SwatchStack>
            <Sliders>
              <SliderRow>
                <SliderLabel>H</SliderLabel>
                <Track $bg="linear-gradient(90deg,#e03030,#ff0,#0f0,#0ff,#00f,#f0f,#e00030)"><Thumb $x={0} /></Track>
                <ValueBox>0</ValueBox>
              </SliderRow>
              <SliderRow>
                <SliderLabel>S</SliderLabel>
                <Track $bg="linear-gradient(90deg,#c8a0a0,#b01020)"><Thumb $x={0} /></Track>
                <ValueBox>0</ValueBox>
              </SliderRow>
              <SliderRow>
                <SliderLabel>B</SliderLabel>
                <Track $bg="linear-gradient(90deg,#000,#fff)"><Thumb $x={71} /></Track>
                <ValueBox>80</ValueBox>
              </SliderRow>
            </Sliders>
          </ColorArea>
          <SwatchRow>
            <Ic n="drop" s={17} c="#777" w={1.300} />
            <Ic n="ring" s={17} c="#bbb" w={1.300} ml={3} />
            <MiniSwatch $ml={8} $bg="linear-gradient(150deg,#fff 42%,#c11 42%,#c11 54%,#fff 54%)" />
            <MiniSwatch $bg="#000" $ring />
            <MiniSwatch $ml={2} $bg="#fff" />
            <HexLabel>#</HexLabel>
            <HexBox>CCCCCC</HexBox>
          </SwatchRow>
          <OpacityRow>
            <Txt $w={39}>Opacity</Txt>
            <OpacityTrack><OpacityThumb /></OpacityTrack>
            <ValueBox $w={45} $ml={9}>100%</ValueBox>
          </OpacityRow>
          <DarkBar />
          <LayersHead>
            <LayersTab>Layers</LayersTab>
            <Ic n="menu" s={13} c="#b0b0b0" w={2} />
          </LayersHead>
          <LayersBody>
            <LayerList>
              <LayerRow>
                <LayerBlack />
                <Tri />
                <LayerThumb />
                Layer 1
              </LayerRow>
            </LayerList>
            <PanelScroll />
          </LayersBody>
          <SearchBar>
            <SearchInner>
              <Ic n="search" s={15} c="#aaa" w={1.600} />
              Search
              <Ic n="close" s={14} c="#8c8c8c" />
            </SearchInner>
          </SearchBar>
        </Panel>

        <Palette>
          <PaletteHead>
            <Ic n="dots" s={14} c="#aaa" />
            <Ic n="listDots" s={14} c="#bbb" />
          </PaletteHead>
          <NoneChip />
          <PalDot $c="#fff"><Ic n="target" s={14} c="#333" w={1.500} /></PalDot>
          {PALETTE.map((c, i) => <PalDot key={i} $c={c} />)}
        </Palette>
      </Body>

      <Dialog>
        <DialogTitle>Gradient Style</DialogTitle>
        <TopPart>
          <PreviewWell>
            <PreviewInner />
            <WellArrow />
          </PreviewWell>
          <TopRight>
            <FormRow>
              <Label $w={86}>Shape</Label>
              <Select $w={176}>Linear<Chevron /></Select>
            </FormRow>
            <FormRow $mt={17}>
              <Label $w={86} $dim>Stroke</Label>
              <Select $w={96} $dim>Normal<Chevron c="#777" /></Select>
            </FormRow>
            <LowerTop>
              <FieldCol>
                <FormRow><Spin label="Angle" lw={84} gap={6} iw={54} sw={12} value="0°" /></FormRow>
                <FormRow><Spin label="Scale" lw={84} gap={6} iw={54} sw={12} value="100%" /></FormRow>
                <FormRow><Spin label="Corner Gap" lw={84} gap={6} iw={54} sw={12} value="2%" /></FormRow>
              </FieldCol>
              <CheckCol>
                <CheckRow $focus>
                  <Check on />Preview
                  <CursorMark viewBox="0 0 13 17">
                    <path d="M1 1v12l3-3 2.500 5.500 2.500-1L6.500 9.500H11z" fill="#111" stroke="#eee" strokeWidth="1" />
                  </CursorMark>
                </CheckRow>
                <CheckRow $mt={8}><Check />Scale First</CheckRow>
                <CheckRow $mt={9}><Check />Distorted</CheckRow>
              </CheckCol>
            </LowerTop>
          </TopRight>
        </TopPart>

        <Rule $mt={16} />
        <FormRow $mt={14} $pl={12}>
          <Label $w={83} $dim>Stop</Label>
          <Select $w={136} $dim><span /><Chevron c="#777" /></Select>
          <Ic n="plusC" s={17} c="#e0e0e0" w={1.300} ml={4} />
          <Ic n="close" s={16} c="#777" w={1.300} ml={6} />
        </FormRow>
        <FormRow $mt={13} $pl={12}>
          <Label $w={83}>Shape</Label>
          <Select $w={136}>Shape<Chevron /></Select>
          <Ic n="plusS" s={16} c="#dcdcdc" w={1.300} ml={5} />
          <Ic n="folder" s={17} c="#dcdcdc" w={1.500} ml={5} />
          <Check on ml={10} />Align Shape
        </FormRow>
        <FormRow $mt={18} $pl={12}>
          <Spin label="Amplitude" lw={81} gap={7} value="100%" />
          <Ic n="nodeX" s={16} c="#e4e4e4" ml={5} />
          <Spin label="Place" lw={103} lml={0} gap={6} value="0%" />
        </FormRow>
        <FormRow $mt={13} $pl={12}>
          <Spin label="Frequency" lw={81} gap={7} value="100%" />
          <Ic n="wave" s={16} c="#e4e4e4" ml={5} />
          <Spin label="Offset" lw={103} gap={6} value="1%" />
        </FormRow>
        <Rule $mt={19} />
        <StyleRow>
          <Label $w={52}>Styles</Label>
          <StyleWell><StyleInner /><WellArrow $ml={3} /></StyleWell>
        </StyleRow>
        <FormRow $mt={18} $pl={12}>
          <Label $w={70}>Color Mode</Label>
          <Select $w={69}>Default<Chevron /></Select>
          <ModeBtn $ml={9}><CheckerChip /></ModeBtn>
          <ModeBtn $ml={1} $w={21} $on><Ic n="splitBox" s={16} /></ModeBtn>
          <ModeBtn $ml={1}><Ic n="gridCorner" s={18} c="#e4e4e4" /></ModeBtn>
          <ModeBtn $ml={9}><Ic n="sliders" s={18} c="#cfcfcf" w={1.100} /></ModeBtn>
          <ModeBtn $ml={9}><Ic n="swap" s={18} c="#eee" /></ModeBtn>
        </FormRow>
        <FormRow $mt={13} $pl={12}>
          <Spin label="Location" lw={68} gap={6} iw={53} value="0%" />
          <Label $w={70} $gap={6}>Repeat</Label>
          <Input $w={53}>1</Input>
          <Stepper solid />
        </FormRow>
        <FormRow $mt={9} $pl={12}>
          <Spin label="Opacity" lw={353} gap={6} iw={70} value="100%" />
        </FormRow>
        <BarRow>
          <GradBar>
            <Stop $x={-5} $c="#bdbdbd" />
            <MidDot />
            <Stop $x={415} $c="#fff" />
          </GradBar>
          <Ic n="trash" s={18} c="#858585" w={1.200} ml={7} />
        </BarRow>
        <ButtonRow>
          <Btn $w={90}>Options</Btn>
          <Btn $w={89} $ml={146}>Cancel</Btn>
          <Btn $w={89} $ml={27} $primary>Ok</Btn>
        </ButtonRow>
      </Dialog>
    </App_>
  );
}
